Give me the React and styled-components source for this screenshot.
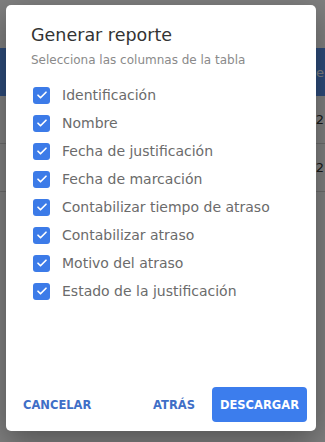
import React, { useState } from 'react';
import styled, { createGlobalStyle } from 'styled-components';

const GlobalStyle = createGlobalStyle`
  body {
    margin: 0;
    font-family: "DejaVu Sans", "Open Sans", sans-serif;
    background: #fff;
  }
`;

const columns = [
  'Identificación',
  'Nombre',
  'Fecha de justificación',
  'Fecha de marcación',
  'Contabilizar tiempo de atraso',
  'Contabilizar atraso',
  'Motivo del atraso',
  'Estado de la justificación',
];

const Page = styled.div`
  width: 325px;
  height: 442px;
  overflow: hidden;
  position: relative;
  padding-top: 48px;
  box-sizing: border-box;
`;

const Table = styled.div`
  display: flex;
  flex-direction: column;
`;

const HeadRow = styled.div`
  height: 48px;
  background: #5a94f2;
  color: #fff;
  display: flex;
  align-items: center;
  justify-content: flex-end;
  font-size: 13px;
  white-space: nowrap;
`;

const BodyRow = styled.div`
  height: 47px;
  border-bottom: 1px solid #d6d6d6;
  display: flex;
  align-items: center;
  justify-content: flex-end;
  font-size: 13px;
  color: #333;
  white-space: nowrap;
`;

const Cell = styled.span`
  margin-right: 1px;
`;

const Overlay = styled.div`
  position: absolute;
  inset: 0;
  background: rgba(0, 0, 0, 0.5);
  display: flex;
  padding: 5px 9px 11px 6px;
  box-sizing: border-box;
`;

const Dialog = styled.div`
  flex: 1;
  background: #fff;
  border-radius: 5px;
  box-shadow: 0 10px 30px rgba(0, 0, 0, 0.35);
  display: flex;
  flex-direction: column;
  padding: 20px 0 9px;
  box-sizing: border-box;
`;

const Title = styled.h2`
  margin: 0 0 0 25px;
  font-size: 17.5px;
  line-height: 21px;
  font-weight: 400;
  color: #333;
`;

const Subtitle = styled.p`
  margin: 7px 0 0 25px;
  font-size: 12px;
  line-height: 14px;
  color: #8a8a8a;
`;

const List = styled.div`
  display: flex;
  flex-direction: column;
  gap: 8px;
  margin: 18px 0 0 27px;
`;

const Row = styled.label`
  display: flex;
  align-items: center;
  gap: 12px;
  height: 20px;
  font-size: 14px;
  color: #6b6b6b;
  cursor: pointer;
`;

const Box = styled.span`
  width: 17px;
  height: 17px;
  border-radius: 3px;
  background: ${p => (p.checked ? '#3c7be8' : '#fff')};
  border: ${p => (p.checked ? 'none' : '2px solid #888')};
  box-sizing: border-box;
  display: flex;
  align-items: center;
  justify-content: center;
  flex-shrink: 0;
`;

const Actions = styled.div`
  margin-top: auto;
  display: flex;
  align-items: center;
  padding: 0 9px 0 8px;
`;

const TextButton = styled.button`
  background: none;
  border: none;
  font-family: inherit;
  font-weight: 700;
  font-size: 11.5px;
  color: #3f6fc7;
  padding: 10px 9px;
  margin-right: ${p => (p.grow ? 'auto' : '0')};
  cursor: pointer;
`;

const MainButton = styled.button`
  margin-left: 8px;
  background: #3c7ded;
  border: none;
  border-radius: 4px;
  color: #fff;
  font-family: inherit;
  font-weight: 700;
  font-size: 11.5px;
  height: 35px;
  padding: 0 8px;
  cursor: pointer;
`;

const Check = () => (
  <svg width="12" height="12" viewBox="0 0 24 24" fill="none" stroke="#fff" strokeWidth="3.4" strokeLinecap="round" strokeLinejoin="round">
    <path d="M4 12.5l5 5L20 6.5" />
  </svg>
);

const App = () => {
  const [checked, setChecked] = useState(columns.map(() => true));
  const toggle = i => setChecked(c => c.map((v, j) => (j === i ? !v : v)));

  return (
    <Page>
      <GlobalStyle />
      <Table>
        <HeadRow><Cell>de</Cell></HeadRow>
        <BodyRow><Cell>02</Cell></BodyRow>
        <BodyRow><Cell>02</Cell></BodyRow>
      </Table>
      <Overlay>
        <Dialog>
          <Title>Generar reporte</Title>
          <Subtitle>Selecciona las columnas de la tabla</Subtitle>
          <List>
            {columns.map((col, i) => (
              <Row key={col} onClick={() => toggle(i)}>
                <Box checked={checked[i]}>{checked[i] && <Check />}</Box>
                {col}
              </Row>
            ))}
          </List>
          <Actions>
            <TextButton grow>CANCELAR</TextButton>
            <TextButton>ATRÁS</TextButton>
            <MainButton>DESCARGAR</MainButton>
          </Actions>
        </Dialog>
      </Overlay>
    </Page>
  );
};

export default App;
